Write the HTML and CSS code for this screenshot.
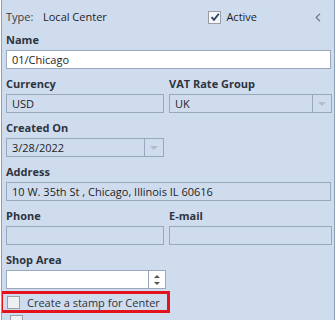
FILE: index.html
```html
<!DOCTYPE html>
<html lang="en">
<head>
  <meta charset="UTF-8" />
  <title>Center</title>
  <link rel="stylesheet" href="styles.css">
</head>
<body>
  <div class="panel">
    <div class="top-row">
      <span class="type-label">Type:</span>
      <span class="type-value">Local Center</span>
      <label class="check active-check"><span class="box checked">
        <svg width="10" height="10" viewBox="0 0 10 10"><path d="M1.5 5.2 L4 7.8 L8.8 1.8" fill="none" stroke="#2a3f63" stroke-width="1.8"/></svg>
      </span>Active</label>
      <span class="collapse">
        <svg width="6" height="9" viewBox="0 0 6 9"><path d="M5 0.8 L1.2 4.5 L5 8.2" fill="none" stroke="#7a7f88" stroke-width="1.3"/></svg>
      </span>
    </div>

    <div class="field">
      <div class="label">Name</div>
      <div class="input white">01/Chicago</div>
    </div>

    <div class="cols">
      <div class="field">
        <div class="label">Currency</div>
        <div class="input">USD</div>
      </div>
      <div class="field">
        <div class="label">VAT Rate Group</div>
        <div class="input combo"><span class="val">UK</span><span class="drop"><i class="tri"></i></span></div>
      </div>
    </div>

    <div class="cols">
      <div class="field">
        <div class="label">Created On</div>
        <div class="input combo"><span class="val">3/28/2022</span><span class="drop"><i class="tri"></i></span></div>
      </div>
    </div>

    <div class="field">
      <div class="label">Address</div>
      <div class="input">10 W. 35th St , Chicago, Illinois IL 60616</div>
    </div>

    <div class="cols">
      <div class="field">
        <div class="label">Phone</div>
        <div class="input"></div>
      </div>
      <div class="field">
        <div class="label">E-mail</div>
        <div class="input"></div>
      </div>
    </div>

    <div class="cols">
      <div class="field">
        <div class="label">Shop Area</div>
        <div class="input white combo spin-wrap"><span class="val"></span><span class="spin"><i class="up"></i><i class="down"></i></span></div>
      </div>
    </div>

    <div class="stamp-row">
      <label class="check"><span class="box"></span>Create a stamp for Center</label>
    </div>
    <div class="next-row">
      <span class="box"></span>
    </div>
  </div>
</body>
</html>
```

FILE: styles.css
```css
body {
  margin: 0;
  background: #fff;
  font-family: "Open Sans", "Noto Sans", sans-serif;
  font-size: 11px;
  color: #1e1e1e;
}

.panel {
  width: 325px;
  height: 320px;
  margin-left: 1px;
  padding: 0 3px 0 4px;
  background: #cfdcee;
  border-left: 1px solid #8e9fb8;
  border-right: 1px solid #8e9fb8;
  overflow: hidden;
}

.top-row {
  display: flex;
  align-items: center;
  height: 16px;
  padding-top: 9px;
  line-height: 16px;
}

.type-label {
  color: #3b3b3b;
  width: 37px;
}

.type-value {
  flex: 1;
}

.check {
  display: flex;
  align-items: center;
  gap: 5px;
  white-space: nowrap;
}

.active-check {
  margin-right: 58px;
}

.box {
  display: inline-flex;
  align-items: center;
  justify-content: center;
  width: 11px;
  height: 11px;
  border: 1px solid #9a9ea6;
  background: #eef0f3;
}

.box.checked {
  background: #f4f6f9;
}

.collapse {
  display: flex;
  margin-right: 10px;
}

.field {
  min-width: 0;
}

.label {
  font-weight: bold;
  color: #2d3440;
  line-height: 16px;
  padding: 7px 0 2px;
}

.input {
  height: 17px;
  line-height: 17px;
  border: 1px solid #9aa8bd;
  padding: 0 5px;
  white-space: nowrap;
  overflow: hidden;
}

.input.white {
  background: #fff;
}

.cols {
  display: grid;
  grid-template-columns: 158px 163px;
  gap: 5px;
}

.combo {
  display: flex;
  padding-right: 0;
}

.combo .val {
  flex: 1;
}

.drop {
  width: 18px;
  border-left: 1px solid #9aa8bd;
  display: flex;
  align-items: center;
  justify-content: center;
}

.tri {
  width: 0;
  height: 0;
  border-left: 4px solid transparent;
  border-right: 4px solid transparent;
  border-top: 4px solid #b4bcc8;
}

.spin-wrap {
  margin-right: -2px;
}

.spin {
  width: 16px;
  border-left: 1px solid #9aa8bd;
  display: flex;
  flex-direction: column;
  align-items: center;
  justify-content: center;
  gap: 4px;
}

.spin .up {
  width: 0;
  height: 0;
  border-left: 3px solid transparent;
  border-right: 3px solid transparent;
  border-bottom: 3px solid #555;
}

.spin .down {
  width: 0;
  height: 0;
  border-left: 3px solid transparent;
  border-right: 3px solid transparent;
  border-top: 3px solid #555;
}

.stamp-row {
  margin: 2px 0 0 -6px;
  width: 160px;
  height: 16px;
  padding: 0 0 0 4px;
  border: 3px solid #e3121d;
  display: flex;
  align-items: center;
  font-size: 11px;
}

.stamp-row .check {
  gap: 7px;
  color: #2d3440;
}

.next-row {
  padding: 2px 0 0 4px;
}
```
